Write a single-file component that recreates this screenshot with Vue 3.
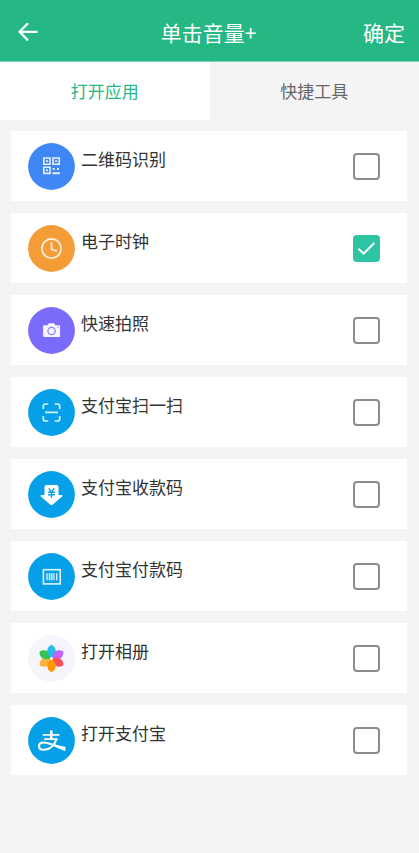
<script setup>
import { ref } from 'vue'

const tab = ref('apps')
const items = ref([
  { id: 'qr', label: '二维码识别', color: '#3f87f5', checked: false },
  { id: 'clock', label: '电子时钟', color: '#f49d37', checked: true },
  { id: 'camera', label: '快速拍照', color: '#7b6bfb', checked: false },
  { id: 'scan', label: '支付宝扫一扫', color: '#05a0e8', checked: false },
  { id: 'collect', label: '支付宝收款码', color: '#05a0e8', checked: false },
  { id: 'pay', label: '支付宝付款码', color: '#05a0e8', checked: false },
  { id: 'album', label: '打开相册', color: '#f6f5fb', checked: false },
  { id: 'alipay', label: '打开支付宝', color: '#05a0e8', checked: false },
])

const petals = [
  { color: '#fbb13c', angle: 240 },
  { color: '#34c252', angle: 300 },
  { color: '#25bce9', angle: 0 },
  { color: '#c065f7', angle: 60 },
  { color: '#fa5059', angle: 120 },
  { color: '#ff9500', angle: 180 },
]
</script>

<template>
  <div class="page">
    <header class="bar">
      <div class="side">
        <button class="back" type="button" aria-label="返回">
          <svg viewBox="0 0 20 20" width="20" height="20">
            <path d="M10 1.2 1.6 9.8 10 18.4M2 9.8H19.500" fill="none" stroke="currentColor" stroke-width="2.3" />
          </svg>
        </button>
      </div>
      <h1 class="title">单击音量+</h1>
      <div class="side end">
        <button class="confirm" type="button">确定</button>
      </div>
    </header>

    <nav class="tabs">
      <button type="button" class="tab" :class="{ active: tab === 'apps' }" @click="tab = 'apps'">打开应用</button>
      <button type="button" class="tab" :class="{ active: tab === 'tools' }" @click="tab = 'tools'">快捷工具</button>
    </nav>

    <main class="list">
      <label v-for="item in items" :key="item.id" class="row">
        <svg class="icon" viewBox="0 0 47 47" aria-hidden="true">
          <circle cx="23.5" cy="23.5" r="23.4" :fill="item.color" />

          <g v-if="item.id === 'qr'" fill="none" stroke="#e6effe" stroke-width="1.6">
            <path d="M15.8 15h6.2v6.2h-6.2zM25 15h6.2v6.2H25zM15.8 24.2h6.2v6.2h-6.2z" />
            <path d="M17.900 18.1h2M27.100 18.1h2M17.900 27.3h2M24.6 26h2M29 26h2M24.4 30.3h7.4" stroke-width="1.9" />
          </g>

          <g v-else-if="item.id === 'clock'" fill="none" stroke="#fff2e2" stroke-width="1.7">
            <circle cx="23.5" cy="23.5" r="9.6" />
            <path d="M23.5 17.2v7l5.5 2" />
          </g>

          <g v-else-if="item.id === 'camera'">
            <path d="M16.2 18.2h3.4l1.3-1.9h5.2l1.3 1.9H31a1.1 1.1 0 0 1 1.1 1.1v9.6a1.1 1.1 0 0 1-1.1 1.1H16.2a1.1 1.1 0 0 1-1.1-1.1v-9.6a1.1 1.1 0 0 1 1.1-1.1z" fill="#f6f4ff" />
            <circle cx="23.6" cy="24" r="3.7" fill="none" stroke="#8b7dfb" stroke-width="1.2" />
            <circle cx="30" cy="20.2" r=".6" fill="#8b7dfb" />
          </g>

          <g v-else-if="item.id === 'scan'" fill="none" stroke="#d5f1ff" stroke-width="1.7">
            <path d="M15.3 20v-3a2 2 0 0 1 2-2h3M26.7 15h3a2 2 0 0 1 2 2v3M31.7 27v3a2 2 0 0 1-2 2h-3M20.3 32h-3a2 2 0 0 1-2-2v-3M17 23.3h13" />
          </g>

          <g v-else-if="item.id === 'collect'">
            <path d="M18.5 14h10a2 2 0 0 1 2 2v8h3.1a.8.8 0 0 1 .6 1.4l-9.4 8.1a2 2 0 0 1-2.6 0l-9.4-8.1a.8.8 0 0 1 .6-1.4h3.1v-8a2 2 0 0 1 2-2z" fill="#fff" />
            <path d="m20.8 17.4 2.7 3.8 2.7-3.8M20 21.2h7M20 23.8h7M23.5 21v6" fill="none" stroke="#159fdf" stroke-width="1.4" />
          </g>

          <g v-else-if="item.id === 'pay'" fill="none" stroke="#dff4ff">
            <rect x="15.4" y="16.7" width="16.8" height="14.2" stroke-width="1.6" />
            <path d="M19 20.2v7M21.4 20.2v7M25.9 20.2v7M28.7 20.2v7" stroke-width="1.3" />
            <path d="M23.6 20.2v7" stroke-width="1.8" />
          </g>

          <g v-else-if="item.id === 'album'">
            <path
              v-for="petal in petals"
              :key="petal.angle"
              d="M23.5 23.5C21.500 21 19.200 19 19.200 16 19.200 13 21.500 10.600 23.5 9.800 25.500 10.600 27.800 13 27.800 16 27.800 19 25.500 21 23.5 23.5z"
              :fill="petal.color"
              :transform="`rotate(${petal.angle} 23.5 23.5)`"
            />
            <circle cx="23.5" cy="23.5" r="1.5" fill="#fff" />
          </g>

          <g v-else fill="none" stroke="#fff">
            <path d="M14.800 17.800h16.600M16.200 22.200h13.400" stroke-width="1.8" />
            <path d="M23.300 13.400v9" stroke-width="2.5" />
            <path d="M28.500 22.200C26.600 28 21.800 32.800 16.200 32.800c-3.500 0-5.200-1.500-5.200-3.600 0-2.200 2-3.700 4.800-3.700 5.400 0 11.500 4 21 6.100" stroke-width="2.1" />
            <path d="M25.500 27.200 37.700 29.900 37.200 34.200C32.500 32.400 28.500 30.400 25.500 28.800z" fill="#fff" stroke="none" />
          </g>
        </svg>
        <span class="name">{{ item.label }}</span>
        <span class="check">
          <input v-model="item.checked" type="checkbox" class="box" />
          <svg v-if="item.checked" class="tick" viewBox="0 0 27 27" aria-hidden="true">
            <path d="M5.5 13.8 10.6 18.700 21.3 8" fill="none" stroke="#fff" stroke-width="2" />
          </svg>
        </span>
      </label>
    </main>
  </div>
</template>

<style>
body {
  background: #f4f4f4;
}
</style>

<style scoped>
.page {
  min-height: 100vh;
  background: #f4f4f4;
  font-family: "Noto Sans CJK SC", sans-serif;
  color: #333;
}

button {
  margin: 0;
  padding: 0;
  border: 0;
  background: none;
  color: inherit;
  font: inherit;
  cursor: pointer;
}

.bar {
  display: flex;
  align-items: center;
  box-sizing: border-box;
  height: 62px;
  padding: 3px 14px 0 12px;
  border-bottom: 1px solid #7bd3b3;
  background: #25b784;
  color: #fff;
}

.side {
  display: flex;
  flex: 1;
}

.end {
  justify-content: flex-end;
}

.back {
  padding: 0 6px;
}

.back svg {
  display: block;
}

.title {
  margin: 0;
  font-size: 21px;
  font-weight: 400;
  line-height: 30px;
}

.confirm {
  font-size: 21px;
  line-height: 30px;
}

.tabs {
  display: flex;
}

.tab {
  flex: 1;
  height: 58px;
  color: #666;
  font-size: 17px;
  line-height: 24px;
}

.tab.active {
  background: #fff;
  color: #25b784;
}

.list {
  display: flex;
  flex-direction: column;
  gap: 12px;
  padding: 11px 12px 12px 11px;
}

.row {
  display: flex;
  align-items: center;
  gap: 6px;
  box-sizing: border-box;
  height: 70px;
  padding: 0 27px 0 17px;
  background: #fff;
  cursor: pointer;
}

.icon {
  flex: none;
  width: 47px;
  height: 47px;
}

.name {
  flex: 1;
  align-self: flex-start;
  padding-top: 16px;
  font-size: 17px;
  line-height: 24px;
}

.check {
  position: relative;
  flex: none;
  width: 27px;
  height: 27px;
}

.box {
  display: block;
  appearance: none;
  box-sizing: border-box;
  width: 27px;
  height: 27px;
  margin: 0;
  border: 2px solid #8c8c8c;
  border-radius: 4px;
  background: #fff;
}

.box:checked {
  border-color: #2cc4a2;
  background: #2cc4a2;
}

.tick {
  position: absolute;
  inset: 0;
  pointer-events: none;
}
</style>
